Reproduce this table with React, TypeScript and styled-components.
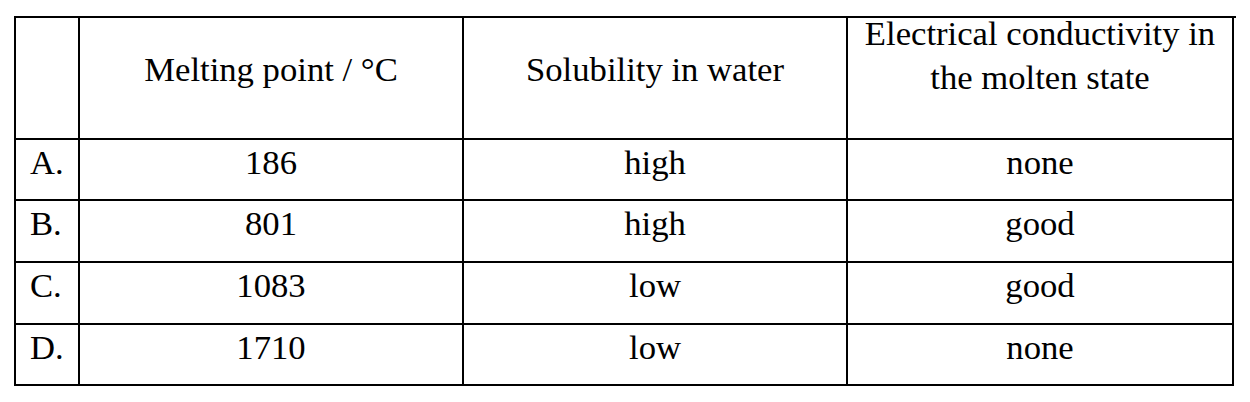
import React from "react";
import styled, { createGlobalStyle } from "styled-components";

const GlobalStyle = createGlobalStyle`
  html, body {
    margin: 0;
    padding: 0;
    background: #ffffff;
  }
  body {
    font-family: "Liberation Serif", "Times New Roman", serif;
    color: #000000;
  }
`;

const Page = styled.div`
  padding: 16px 0 0 14px;
  width: 1250px;
  height: 402px;
  box-sizing: border-box;
`;

const Table = styled.div`
  display: grid;
  grid-template-columns: 64px 384px 384px 386px;
  grid-template-rows: 122px 61px 62px 62px 61px;
  width: 1220px;
  border-left: 2px solid #000;
  border-top: 2px solid #000;
  font-family: "Liberation Serif", "Times New Roman", serif;
  font-size: 34.67px;
  line-height: 40px;
  color: #000;
`;

const Cell = styled.div<{ $align?: "left" | "center" }>`
  box-sizing: border-box;
  border-right: 2px solid #000;
  border-bottom: 2px solid #000;
  display: flex;
  flex-direction: column;
  justify-content: flex-start;
  align-items: ${(p) => (p.$align === "left" ? "flex-start" : "center")};
  text-align: center;
  padding: ${(p) => (p.$align === "left" ? "2px 0 0 14px" : "2px 0 0 0")};
  white-space: nowrap;
`;

const HeadCell = styled(Cell)<{ $lines?: number }>`
  justify-content: flex-end;
  line-height: ${(p) => ((p.$lines ?? 1) > 1 ? "44px" : "40px")};
  padding: ${(p) => ((p.$lines ?? 1) > 1 ? "0 0 39px 0" : "0 0 49px 0")};
`;

const Line = styled.span`
  display: block;
`;

const rows = [
  ["A.", "186", "high", "none"],
  ["B.", "801", "high", "good"],
  ["C.", "1083", "low", "good"],
  ["D.", "1710", "low", "none"],
];

export default function App() {
  return (
    <>
      <GlobalStyle />
      <Page>
        <Table role="table">
          <HeadCell />
          <HeadCell>
            <Line>Melting point / °C</Line>
          </HeadCell>
          <HeadCell>
            <Line>Solubility in water</Line>
          </HeadCell>
          <HeadCell $lines={2}>
            <Line>Electrical conductivity in</Line>
            <Line>the molten state</Line>
          </HeadCell>
          {rows.map((r) =>
            r.map((v, i) => (
              <Cell key={r[0] + i} $align={i === 0 ? "left" : "center"}>
                {v}
              </Cell>
            ))
          )}
        </Table>
      </Page>
    </>
  );
}
